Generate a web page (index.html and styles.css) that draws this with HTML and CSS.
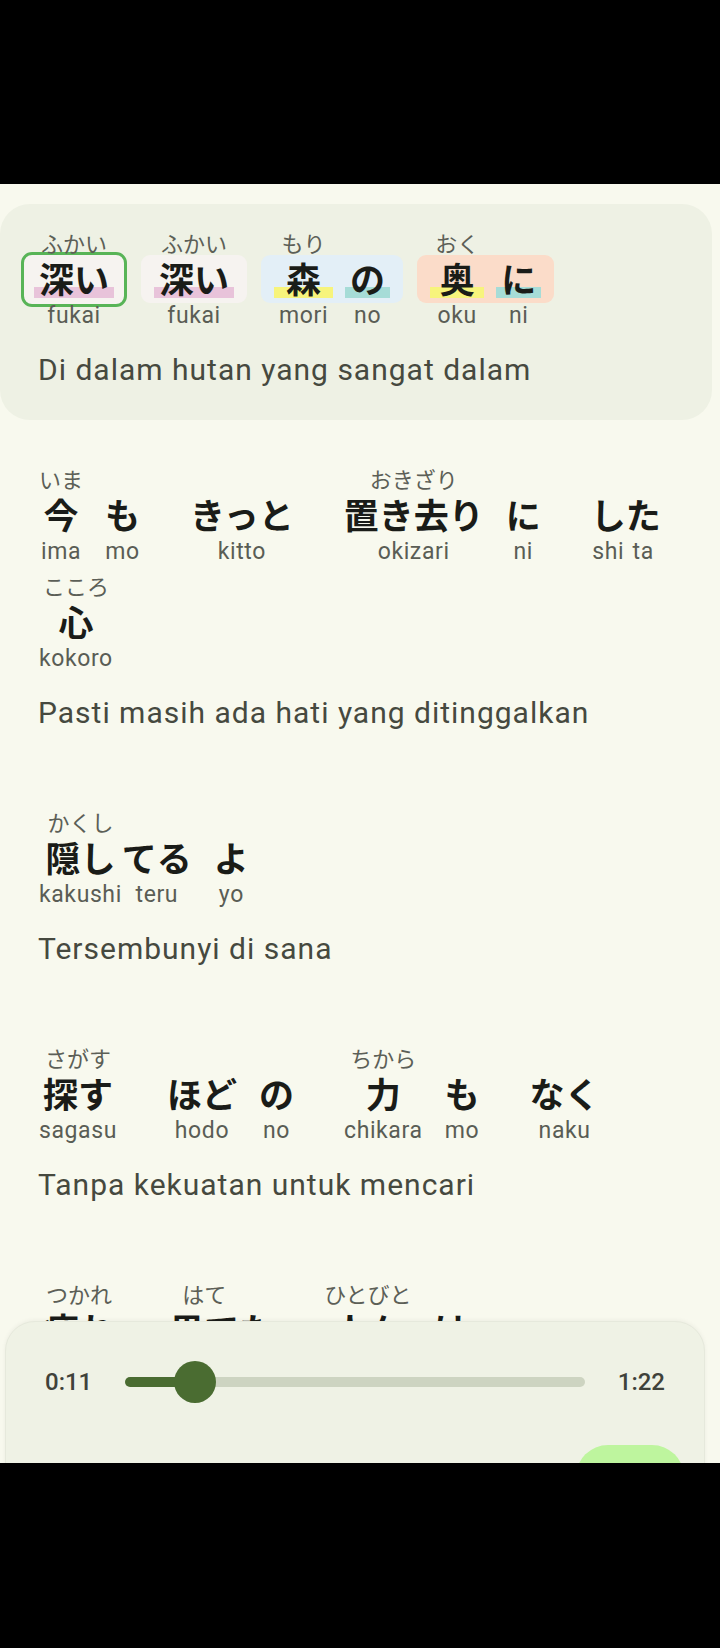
FILE: index.html
```html
<!DOCTYPE html>
<html lang="id">
<head>
<meta charset="utf-8">
<title>Lirik</title>
<link rel="stylesheet" href="styles.css">
</head>
<body>
<div class="bar-top"></div>
<main class="app">
  <section class="lyrics">
    <div class="line current">
      <div class="words">
        <div class="group">
          <div class="chip now c-white"></div>
          <div class="tokens">
            <div class="token u-pink"><div class="seg"><span class="furi">ふかい</span><span class="main">深い</span><span class="romaji">fukai</span></div></div>
          </div>
        </div>
        <div class="group">
          <div class="chip c-white"></div>
          <div class="tokens">
            <div class="token u-pink"><div class="seg"><span class="furi">ふかい</span><span class="main">深い</span><span class="romaji">fukai</span></div></div>
          </div>
        </div>
        <div class="group">
          <div class="chip c-blue"></div>
          <div class="tokens">
            <div class="token u-yellow"><div class="seg"><span class="furi">もり</span><span class="main">森</span><span class="romaji">mori</span></div></div>
            <div class="token u-teal"><div class="seg"><span class="furi"></span><span class="main">の</span><span class="romaji">no</span></div></div>
          </div>
        </div>
        <div class="group">
          <div class="chip c-peach"></div>
          <div class="tokens">
            <div class="token u-yellow"><div class="seg"><span class="furi">おく</span><span class="main">奥</span><span class="romaji">oku</span></div></div>
            <div class="token u-teal"><div class="seg"><span class="furi"></span><span class="main">に</span><span class="romaji">ni</span></div></div>
          </div>
        </div>
      </div>
      <p class="trans">Di dalam hutan yang sangat dalam</p>
    </div>

    <div class="line">
      <div class="words">
        <div class="group"><div class="tokens">
          <div class="token"><div class="seg"><span class="furi">いま</span><span class="main">今</span><span class="romaji">ima</span></div></div>
          <div class="token"><div class="seg"><span class="furi"></span><span class="main">も</span><span class="romaji">mo</span></div></div>
        </div></div>
        <div class="group"><div class="tokens">
          <div class="token"><div class="seg"><span class="furi"></span><span class="main">きっと</span><span class="romaji">kitto</span></div></div>
        </div></div>
        <div class="group"><div class="tokens">
          <div class="token"><div class="seg"><span class="furi">おきざり</span><span class="main">置き去り</span><span class="romaji">okizari</span></div></div>
          <div class="token"><div class="seg"><span class="furi"></span><span class="main">に</span><span class="romaji">ni</span></div></div>
        </div></div>
        <div class="group"><div class="tokens">
          <div class="token">
            <div class="seg"><span class="furi"></span><span class="main">し</span><span class="romaji">shi</span></div>
            <div class="seg"><span class="furi"></span><span class="main">た</span><span class="romaji">ta</span></div>
          </div>
        </div></div>
        <div class="group"><div class="tokens">
          <div class="token"><div class="seg"><span class="furi">こころ</span><span class="main">心</span><span class="romaji">kokoro</span></div></div>
        </div></div>
      </div>
      <p class="trans">Pasti masih ada hati yang ditinggalkan</p>
    </div>

    <div class="line">
      <div class="words">
        <div class="group"><div class="tokens">
          <div class="token">
            <div class="seg"><span class="furi">かくし</span><span class="main">隠し</span><span class="romaji">kakushi</span></div>
            <div class="seg"><span class="furi"></span><span class="main">てる</span><span class="romaji">teru</span></div>
          </div>
          <div class="token"><div class="seg"><span class="furi"></span><span class="main">よ</span><span class="romaji">yo</span></div></div>
        </div></div>
      </div>
      <p class="trans">Tersembunyi di sana</p>
    </div>

    <div class="line">
      <div class="words">
        <div class="group"><div class="tokens">
          <div class="token"><div class="seg"><span class="furi">さがす</span><span class="main">探す</span><span class="romaji">sagasu</span></div></div>
        </div></div>
        <div class="group"><div class="tokens">
          <div class="token"><div class="seg"><span class="furi"></span><span class="main">ほど</span><span class="romaji">hodo</span></div></div>
          <div class="token"><div class="seg"><span class="furi"></span><span class="main">の</span><span class="romaji">no</span></div></div>
        </div></div>
        <div class="group"><div class="tokens">
          <div class="token"><div class="seg"><span class="furi">ちから</span><span class="main">力</span><span class="romaji">chikara</span></div></div>
          <div class="token"><div class="seg"><span class="furi"></span><span class="main">も</span><span class="romaji">mo</span></div></div>
        </div></div>
        <div class="group"><div class="tokens">
          <div class="token"><div class="seg"><span class="furi"></span><span class="main">なく</span><span class="romaji">naku</span></div></div>
        </div></div>
      </div>
      <p class="trans">Tanpa kekuatan untuk mencari</p>
    </div>

    <div class="line">
      <div class="words">
        <div class="group"><div class="tokens">
          <div class="token"><div class="seg"><span class="furi">つかれ</span><span class="main">疲れ</span><span class="romaji">tsukare</span></div></div>
        </div></div>
        <div class="group"><div class="tokens">
          <div class="token">
            <div class="seg"><span class="furi">はて</span><span class="main">果て</span><span class="romaji">hate</span></div>
            <div class="seg"><span class="furi"></span><span class="main">た</span><span class="romaji">ta</span></div>
          </div>
        </div></div>
        <div class="group"><div class="tokens">
          <div class="token"><div class="seg"><span class="furi">ひとびと</span><span class="main">人々</span><span class="romaji">hitobito</span></div></div>
          <div class="token"><div class="seg"><span class="furi"></span><span class="main">は</span><span class="romaji">wa</span></div></div>
        </div></div>
      </div>
      <p class="trans">Orang-orang yang kelelahan</p>
    </div>
  </section>

  <div class="player">
    <div class="timeline">
      <span class="time">0:11</span>
      <div class="track"><div class="thumb"></div></div>
      <span class="time">1:22</span>
    </div>
    <div class="controls">
      <div class="play"></div>
    </div>
  </div>
</main>
<div class="bar-bottom"></div>
</body>
</html>
```
FILE: styles.css
```css
html, body {
  margin: 0;
  padding: 0;
}

body {
  width: 720px;
  height: 1648px;
  background: #000;
  overflow: hidden;
  font-family: Roboto, "Noto Sans CJK JP", sans-serif;
}

.bar-top {
  height: 184px;
  background: #000;
}

.bar-bottom {
  height: 185px;
  background: #000;
}

.app {
  position: relative;
  height: 1279px;
  overflow: hidden;
  background: #f8f9ee;
}

.lyrics {
  display: flex;
  flex-direction: column;
  gap: 20px;
  padding: 20px 8px 0 0;
}

.line {
  padding: 26px 21px 32px;
  border-radius: 30px;
}

.line.current {
  background: #eef1e4;
}

.words {
  display: flex;
  flex-wrap: wrap;
  column-gap: 14px;
  row-gap: 7px;
}

.group {
  display: grid;
  padding: 0 13px;
}

.group > * {
  grid-area: 1 / 1;
}

.chip {
  margin: 25px -13px 27px;
  border-radius: 9px;
}

.chip.now {
  margin: 22px -13px 23px;
  border: 3px solid #58b457;
  border-radius: 11px;
}

.c-white { background: #f6f3f0; }
.c-blue { background: #e3eff7; }
.c-peach { background: #fbdcc9; }

.tokens {
  display: flex;
  gap: 12px;
}

.token {
  display: flex;
  padding: 0 5px;
}

.u-pink { background: linear-gradient(to bottom, transparent 57px, #e8c3da 57px, #e8c3da 68px, transparent 68px); }
.u-yellow { background: linear-gradient(to bottom, transparent 57px, #f7f47c 57px, #f7f47c 68px, transparent 68px); }
.u-teal { background: linear-gradient(to bottom, transparent 57px, #a6dcd7 57px, #a6dcd7 68px, transparent 68px); }

.seg {
  display: flex;
  flex-direction: column;
  align-items: center;
}

.furi {
  height: 28px;
  font-family: "Noto Sans CJK JP", sans-serif;
  font-size: 22px;
  line-height: 24px;
  color: #5c5f57;
  white-space: nowrap;
}

.main {
  padding-bottom: 4px;
  font-family: "Noto Sans CJK JP", sans-serif;
  font-weight: 700;
  font-size: 35px;
  line-height: 40px;
  color: #1a1c18;
  white-space: nowrap;
}

.romaji {
  font-family: Roboto, sans-serif;
  font-size: 23px;
  line-height: 28px;
  letter-spacing: 0.6px;
  color: #5a5d55;
  white-space: nowrap;
}

.trans {
  margin: 22px 0 0 17px;
  font-family: Roboto, sans-serif;
  font-size: 30px;
  line-height: 36px;
  letter-spacing: 1px;
  color: #46493f;
}

.player {
  position: absolute;
  left: 5px;
  right: 15px;
  top: 1137px;
  height: 320px;
  border-radius: 30px 30px 0 0;
  background: #eff2e5;
  border: 1px solid #e6e9dc;
  box-shadow: 0 -1px 4px rgba(0, 0, 0, 0.05);
}

.timeline {
  display: flex;
  align-items: center;
  gap: 33px;
  height: 42px;
  padding: 39px 39px 0;
}

.time {
  font-family: Roboto, sans-serif;
  font-size: 24px;
  font-weight: 500;
  color: #3f423a;
}

.track {
  position: relative;
  flex: 1;
  height: 10px;
  border-radius: 5px;
  background: linear-gradient(to right, #4a6c31 70px, #cdd4c1 70px);
}

.thumb {
  position: absolute;
  left: 70px;
  top: 50%;
  width: 42px;
  height: 42px;
  border-radius: 50%;
  background: #4a6c31;
  transform: translate(-50%, -50%);
}

.controls {
  display: flex;
  justify-content: flex-end;
  padding: 42px 20px 0 0;
}

.play {
  width: 108px;
  height: 64px;
  border-radius: 32px;
  background: #bef59e;
}
```
